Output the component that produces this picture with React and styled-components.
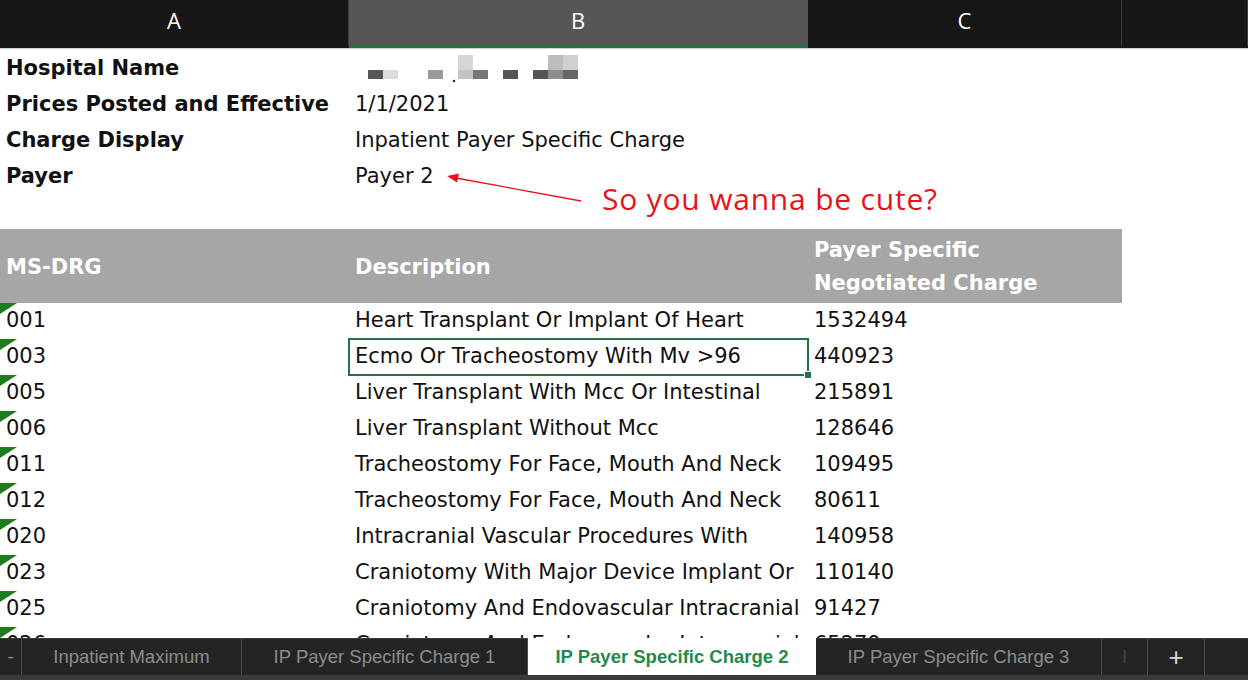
import React from 'react';
import styled, { createGlobalStyle } from 'styled-components';

const GlobalStyle = createGlobalStyle`
  html, body {
    margin: 0;
    padding: 0;
    background: #ffffff;
    overflow: hidden;
  }
`;

const colors = {
  headerBar: '#171717',
  headerSelected: '#565656',
  green: '#217346',
  tableHead: '#a6a6a6',
  text: '#111111',
  red: '#e8121b',
  tabBar: '#242424',
  tabText: '#8c8c8c',
};

const COLS = [349, 459, 314];
const cellFont = '"DejaVu Sans", Verdana, Tahoma, sans-serif';

const Page = styled.div`
  width: 1248px;
  height: 680px;
  display: flex;
  flex-direction: column;
  overflow: hidden;
  background: #fff;
`;

const ColumnBar = styled.div`
  display: flex;
  height: 48px;
  background: ${colors.headerBar};
  border-bottom: 1px solid #cfcfcf;
  flex-shrink: 0;
`;

const ColLetter = styled.div`
  width: ${(p) => (p.$w ? `${p.$w}px` : 'auto')};
  flex: ${(p) => (p.$w ? '0 0 auto' : '1')};
  display: flex;
  align-items: center;
  justify-content: center;
  box-sizing: border-box;
  color: #fff;
  font-family: "Open Sans", "Noto Sans", sans-serif;
  font-size: 22px;
  background: ${(p) => (p.$selected ? colors.headerSelected : 'transparent')};
  border-bottom: 3px solid ${(p) => (p.$selected ? colors.green : 'transparent')};
  border-right: 1px solid ${(p) => (p.$selected ? 'transparent' : '#3d3d3d')};
  padding-bottom: 6px;
`;

const Sheet = styled.div`
  position: relative;
  flex: 1;
  overflow: hidden;
`;

const Row = styled.div`
  display: flex;
  height: ${(p) => p.$h || 36}px;
`;

const Cell = styled.div`
  position: relative;
  width: ${(p) => p.$w}px;
  flex-shrink: 0;
  box-sizing: border-box;
  padding: ${(p) => (p.$lift ? '0 6px 1px' : '2px 6px 0')};
  display: flex;
  flex-direction: column;
  justify-content: center;
  font-family: ${cellFont};
  font-size: 21px;
  font-weight: ${(p) => (p.$bold ? 700 : 400)};
  color: ${(p) => p.$color || colors.text};
  background: ${(p) => p.$bg || 'transparent'};
  line-height: 33px;
  white-space: nowrap;
  outline: ${(p) => (p.$selected ? `2px solid ${colors.green}` : 'none')};
  outline-offset: -1px;

  ${(p) => p.$flag && `
    &::before {
      content: '';
      position: absolute;
      left: 0;
      top: 0;
      border-top: 11px solid #1b7d1b;
      border-right: 17px solid transparent;
    }
  `}

  ${(p) => p.$selected && `
    &::after {
      content: '';
      position: absolute;
      right: -4px;
      bottom: -4px;
      width: 6px;
      height: 6px;
      background: ${colors.green};
      border: 1px solid #fff;
    }
  `}
`;

const Redacted = styled.svg`
  display: block;
  margin: 1px 0 0 13px;
`;

const Annotation = styled.div`
  position: absolute;
  left: 0;
  top: 0;
  width: 100%;
  height: 200px;
  pointer-events: none;
`;

const Note = styled.div`
  position: absolute;
  left: 602px;
  top: 129px;
  font-family: "Open Sans", "Noto Sans", sans-serif;
  font-size: 30px;
  letter-spacing: 0.8px;
  color: ${colors.red};
  white-space: nowrap;
`;

const ArrowSvg = styled.svg`
  position: absolute;
  left: 0;
  top: 0;
`;

const TabBar = styled.div`
  display: flex;
  height: 42px;
  flex-shrink: 0;
  background: ${colors.tabBar};
  border-top: 1px solid #3b3b3b;
  box-sizing: border-box;
  border-bottom: 5px solid #3a3a3a;
`;

const Tab = styled.div`
  width: ${(p) => (p.$w ? `${p.$w}px` : 'auto')};
  flex: ${(p) => (p.$w ? '0 0 auto' : '1')};
  box-sizing: border-box;
  display: flex;
  align-items: center;
  justify-content: center;
  font-family: "Liberation Sans", Arial, sans-serif;
  font-size: 18.5px;
  color: ${(p) => (p.$active ? '#1f8a4c' : colors.tabText)};
  font-weight: ${(p) => (p.$active ? 700 : 400)};
  background: ${(p) => (p.$active ? '#fff' : 'transparent')};
  border-right: ${(p) => (p.$active || p.$plain ? 'none' : '1px solid #4a4a4a')};
  margin-top: ${(p) => (p.$active ? '-1px' : '0')};
  white-space: nowrap;
`;

const Faint = styled.span`
  opacity: 0.3;
`;

const PlusTab = styled(Tab)`
  color: #d8d8d8;
  font-size: 26px;
  font-weight: 400;
`;

const rows = [
  ['001', 'Heart Transplant Or Implant Of Heart', '1532494'],
  ['003', 'Ecmo Or Tracheostomy With Mv >96', '440923'],
  ['005', 'Liver Transplant With Mcc Or Intestinal', '215891'],
  ['006', 'Liver Transplant Without Mcc', '128646'],
  ['011', 'Tracheostomy For Face, Mouth And Neck', '109495'],
  ['012', 'Tracheostomy For Face, Mouth And Neck', '80611'],
  ['020', 'Intracranial Vascular Procedures With', '140958'],
  ['023', 'Craniotomy With Major Device Implant Or', '110140'],
  ['025', 'Craniotomy And Endovascular Intracranial', '91427'],
  ['026', 'Craniotomy And Endovascular Intracranial', '65279'],
];

const blocks = [
  [0, 15, '#565656'], [15, 15, '#dcdcdc'], [60, 15, '#9a9a9a'],
  [90, 15, '#c4c4c4'], [105, 15, '#777777'], [135, 15, '#555555'],
  [165, 15, '#555555'], [180, 15, '#8c8c8c'], [195, 15, '#666666'],
];

const HospitalBlur = () => (
  <Redacted width="220" height="28" viewBox="0 0 220 28">
    <rect x="90" y="0" width="15" height="15" fill="#d6d6d6" />
    <rect x="180" y="0" width="15" height="15" fill="#bdbdbd" />
    <rect x="195" y="0" width="15" height="15" fill="#d0d0d0" />
    {blocks.map(([x, w, c]) => (
      <rect key={x} x={x} y="15" width={w} height="9" fill={c} />
    ))}
    <circle cx="86" cy="26" r="1.3" fill="#333" />
  </Redacted>
);

const meta = [
  ['Hospital Name', <HospitalBlur />],
  ['Prices Posted and Effective', '1/1/2021'],
  ['Charge Display', 'Inpatient Payer Specific Charge'],
  ['Payer', 'Payer 2'],
];

const App = () => (
  <Page>
    <GlobalStyle />
    <ColumnBar>
      <ColLetter $w={COLS[0]}>A</ColLetter>
      <ColLetter $w={COLS[1]} $selected>B</ColLetter>
      <ColLetter $w={COLS[2]}>C</ColLetter>
      <ColLetter />
    </ColumnBar>

    <Sheet>
      {meta.map(([label, value]) => (
        <Row key={label}>
          <Cell $w={COLS[0]} $bold>{label}</Cell>
          <Cell $w={COLS[1]}>{value}</Cell>
        </Row>
      ))}
      <Row />
      <Row $h={74}>
        <Cell $w={COLS[0]} $bg={colors.tableHead} $color="#fff" $bold>MS-DRG</Cell>
        <Cell $w={COLS[1]} $bg={colors.tableHead} $color="#fff" $bold>Description</Cell>
        <Cell $w={COLS[2]} $bg={colors.tableHead} $color="#fff" $bold>
          <span>Payer Specific</span>
          <span>Negotiated Charge</span>
        </Cell>
      </Row>
      {rows.map(([code, desc, amount], i) => (
        <Row key={code}>
          <Cell $w={COLS[0]} $flag $lift>{code}</Cell>
          <Cell $w={COLS[1]} $lift $selected={i === 1}>{desc}</Cell>
          <Cell $w={COLS[2]} $lift>{amount}</Cell>
        </Row>
      ))}

      <Annotation>
        <ArrowSvg width="1248" height="200" viewBox="0 0 1248 200">
          <line x1="581" y1="152" x2="456" y2="129" stroke={colors.red} strokeWidth="1.3" />
          <polygon points="447,127 459,124.5 457,133.5" fill={colors.red} />
        </ArrowSvg>
        <Note>So you wanna be cute?</Note>
      </Annotation>
    </Sheet>

    <TabBar>
      <Tab $w={22}>-</Tab>
      <Tab $w={220}>Inpatient Maximum</Tab>
      <Tab $w={286}>IP Payer Specific Charge 1</Tab>
      <Tab $w={288} $active>IP Payer Specific Charge 2</Tab>
      <Tab $w={286}>IP Payer Specific Charge 3</Tab>
      <Tab $w={46}><Faint>I</Faint></Tab>
      <PlusTab $w={57}>+</PlusTab>
      <Tab $plain />
    </TabBar>
  </Page>
);

export default App;
